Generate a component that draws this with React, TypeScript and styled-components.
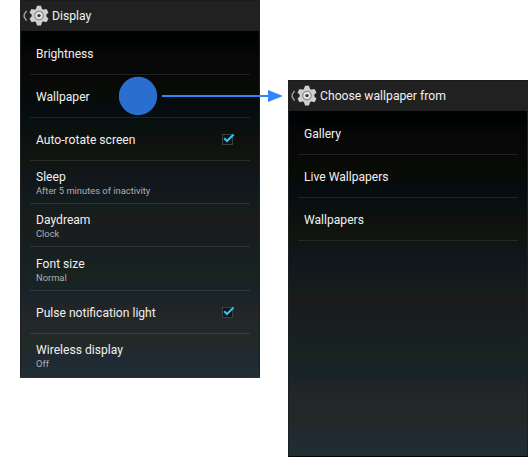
import React from "react";
import styled, { createGlobalStyle } from "styled-components";

const GlobalStyle = createGlobalStyle`
  * { box-sizing: border-box; }
  html, body { margin: 0; background: #fff; }
  body { font-family: Roboto, "Liberation Sans", sans-serif; }
`;

const Stage = styled.main`
  position: relative;
  display: flex;
  align-items: flex-start;
  gap: 28px;
  width: 528px;
  height: 471px;
  padding-left: 20px;
  overflow: hidden;
`;

const Phone = styled.section<{ $height: number; $top?: number; $base?: string }>`
  display: flex;
  flex-direction: column;
  flex: none;
  width: 240px;
  height: ${(p) => p.$height}px;
  margin-top: ${(p) => p.$top ?? 0}px;
  border: 1px solid #1b2123;
  border-top: 0;
  border-bottom-color: ${(p) => p.$base ?? "#2a383e"};
  background: linear-gradient(
    180deg,
    #000 0%, #000203 10%, #070707 15%, #080808 20%, #080b06 24%, #060b10 29%,
    #07110f 33%, #10110f 38%, #11150f 42%, #10161a 46%, #12191c 51%,
    #141d1c 55%, #1b1c1b 59%, #161e21 65%, #19231f 73%, #18232a 78%,
    #222527 82%, #222829 86%, #212a27 91%, #212934 95%, #1f2d33 98%, #202d32 100%
  );
`;

const Header = styled.header`
  display: flex;
  align-items: center;
  flex: none;
  height: 31px;
  margin: 0 -1px;
  padding-left: 2px;
  background: #212121;
  border-top: 1px solid #1a1a1a;
  color: #f0f0f0;
`;

const Title = styled.h1`
  margin: 0 0 0 3px;
  font-size: 12.2px;
  font-weight: 400;
  line-height: 20px;
  white-space: nowrap;
`;

const List = styled.ul`
  list-style: none;
  margin: 0;
  padding: 1px 9px 0;
`;

const Row = styled.li`
  display: flex;
  align-items: center;
  justify-content: space-between;
  height: 43.1px;
  padding: 2px 15px 0 6px;
  border-bottom: 1px solid rgba(255, 255, 255, 0.1);
  color: #f0f0f0;

  &:last-child {
    border-bottom-color: transparent;
  }
`;

const LastRule = styled.div`
  height: 1px;
  margin: -1px 9px 0;
  background: #232828;
`;

const Label = styled.div`
  font-size: 12.1px;
  line-height: 16px;
  white-space: nowrap;
`;

const Note = styled.div`
  font-size: 9.35px;
  line-height: 12px;
  color: #adb1b1;
  white-space: nowrap;
`;

const Drawing = styled.svg`
  display: block;
  flex: none;
`;

const Flow = styled.svg`
  position: absolute;
  left: 116px;
  top: 74px;
`;

const teeth = [0, 60, 120, 180, 240, 300];

function HeaderBar({ title }: { title: string }) {
  return (
    <Header>
      <Drawing width="27" height="24" viewBox="0 0 27 24">
        <path d="M4.6 6.8 L2.2 10.4 V13 L4.6 16.6" fill="none" stroke="#a0a0a0" strokeWidth="1.4" />
        <g transform="translate(17 11.6)">
          {teeth.map((a) => (
            <path key={a} d="M-3.2 -6 L-2 -9.8 H2 L3.2 -6 Z" fill="#d0d0d0" transform={`rotate(${a})`} />
          ))}
          <circle r="7.3" fill="#cecece" />
          <circle r="4.3" fill="#e6e6e6" stroke="#858585" strokeWidth="1.1" />
          <circle r="1.7" fill="#3a3a3a" />
        </g>
      </Drawing>
      <Title>{title}</Title>
    </Header>
  );
}

function Check() {
  return (
    <Drawing width="14" height="14" viewBox="0 0 14 14">
      <rect x="1.5" y="1.5" width="10" height="10" fill="#101313" stroke="#3b4040" />
      <path d="M3.2 5.2 L6 8 L12.6 1.6" fill="none" stroke="#35c3f3" strokeWidth="2.1" />
    </Drawing>
  );
}

type Item = { label: string; note?: string; checked?: boolean };

const displayItems: Item[] = [
  { label: "Brightness" },
  { label: "Wallpaper" },
  { label: "Auto-rotate screen", checked: true },
  { label: "Sleep", note: "After 5 minutes of inactivity" },
  { label: "Daydream", note: "Clock" },
  { label: "Font size", note: "Normal" },
  { label: "Pulse notification light", checked: true },
  { label: "Wireless display", note: "Off" },
];

const wallpaperItems: Item[] = [{ label: "Gallery" }, { label: "Live Wallpapers" }, { label: "Wallpapers" }];

function Settings({ items }: { items: Item[] }) {
  return (
    <>
      <List>
        {items.map((item) => (
          <Row key={item.label}>
            <div>
              <Label>{item.label}</Label>
              {item.note && <Note>{item.note}</Note>}
            </div>
            {item.checked && <Check />}
          </Row>
        ))}
      </List>
      <LastRule />
    </>
  );
}

export default function App() {
  return (
    <>
      <GlobalStyle />
      <Stage>
        <Phone $height={378}>
          <HeaderBar title="Display" />
          <Settings items={displayItems} />
        </Phone>
        <Phone $height={377} $top={80} $base="#030608">
          <HeaderBar title="Choose wallpaper from" />
          <Settings items={wallpaperItems} />
        </Phone>
        <Flow width="168" height="44" viewBox="0 0 168 44">
          <circle cx="22" cy="22" r="19.2" fill="#2a6fcf" />
          <path d="M46 22 H153" stroke="#3385ff" strokeWidth="2" />
          <path d="M152 16 L167 22 L152 28 Z" fill="#3385ff" />
        </Flow>
      </Stage>
    </>
  );
}
